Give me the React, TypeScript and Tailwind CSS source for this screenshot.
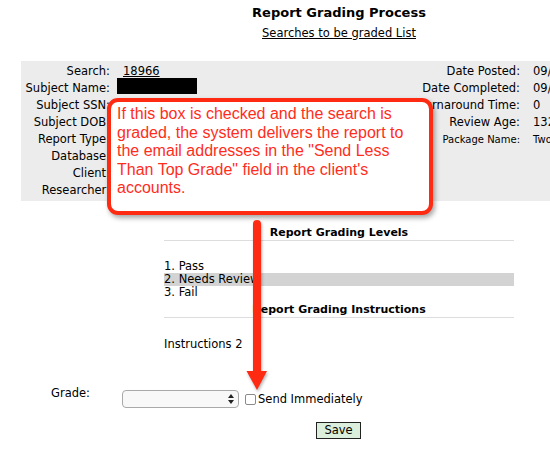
import React from "react";

const sans = { fontFamily: '"DejaVu Sans", Verdana, sans-serif' };

const leftRows: { label: string; value?: React.ReactNode }[] = [
  { label: "Search:", value: <a className="underline cursor-pointer">18966</a> },
  {
    label: "Subject Name:",
    value: <div className="h-[17px]"><span className="block w-[80px] h-[16px] bg-black -ml-[6px] -mt-[1.5px]" /></div>,
  },
  { label: "Subject SSN:", value: "XXX-XX-1234" },
  { label: "Subject DOB:", value: "01/01/1980" },
  { label: "Report Type:", value: "County Criminal" },
  { label: "Database:", value: "Statewide" },
  { label: "Client:", value: "Demo Client" },
  { label: "Researcher:", value: "Staff" },
];

const rightRows: { label: string; value: string; small?: boolean }[] = [
  { label: "Date Posted:", value: "09/14/2016" },
  { label: "Date Completed:", value: "09/14/2016" },
  { label: "Turnaround Time:", value: "0" },
  { label: "Review Age:", value: "132" },
  { label: "Package Name:", value: "Two County", small: true },
];

function Arrow() {
  return (
    <svg
      className="absolute left-[240px] top-[212px]"
      width="40"
      height="190"
      viewBox="0 0 40 190"
      style={{ filter: "drop-shadow(1px 2px 1.5px rgba(0,0,0,0.3))" }}
    >
      <line x1="17" y1="12" x2="17" y2="166" stroke="#ff2a12" strokeWidth="8" strokeLinecap="round" />
      <polygon points="6.5,159 27,159 17,178" fill="#ff2a12" />
    </svg>
  );
}

export default function App() {
  return (
    <div className="relative w-[550px] h-[457px] overflow-hidden bg-white text-black" style={sans}>
      <div className="w-[678px]">
        <div className="pt-[5px] text-center">
          <h1 className="text-[13px] leading-[16px] font-bold">Report Grading Process</h1>
          <a className="block mt-[4.5px] text-[11.5px] leading-[14px] underline cursor-pointer">
            Searches to be graded List
          </a>
        </div>

        <div className="mt-[21.5px] ml-[21px] w-[636px] bg-[#ececec] pt-[1.5px] pb-[2px] flex text-[11.5px] leading-[17px]">
          <div className="w-[330px] grid grid-cols-[89px_1fr] content-start">
            {leftRows.map((r) => (
              <React.Fragment key={r.label}>
                <div className="text-right whitespace-nowrap">{r.label}</div>
                <div className="pl-[13px] whitespace-nowrap">{r.value}</div>
              </React.Fragment>
            ))}
          </div>
          <div className="grid grid-cols-[169px_1fr] content-start">
            {rightRows.map((r) => (
              <React.Fragment key={r.label}>
                <div className={`text-right whitespace-nowrap ${r.small ? "text-[10px]" : ""}`}>{r.label}</div>
                <div className={`pl-[13px] whitespace-nowrap ${r.small ? "text-[10px]" : ""}`}>{r.value}</div>
              </React.Fragment>
            ))}
          </div>
        </div>

        <div className="ml-[164px] w-[350px] mt-[25px] text-[11.5px]">
          <div className="text-center font-bold text-[11px] leading-[14px] border-b border-[#dddddd]">
            Report Grading Levels
          </div>
          <div className="mt-[19.5px] leading-[13px]">
            <div>1. Pass</div>
            <div className="bg-[#d3d3d3]">2. Needs Review</div>
            <div>3. Fail</div>
          </div>
          <div className="mt-[3.5px] text-center font-bold text-[11px] leading-[14px] border-b border-[#dddddd]">
            Report Grading Instructions
          </div>
          <div className="mt-[20.5px] leading-[13px]">Instructions 2</div>
        </div>

        <div className="mt-[35px] flex items-start text-[11.5px]">
          <div className="ml-[51px] w-[71px] leading-[14px]">Grade:</div>
          <div className="mt-[4px] flex items-center">
            <div className="relative h-[18px]">
              <select className="block appearance-none w-[117px] h-[18px] rounded-[4px] border border-[#a9a9a9] bg-[#f8f8f8] outline-none" />
              <svg className="absolute right-[5px] top-[4px]" width="6" height="10" viewBox="0 0 6 10">
                <polygon points="3,0 6,4 0,4" fill="#222" />
                <polygon points="0,6 6,6 3,10" fill="#222" />
              </svg>
            </div>
            <input
              type="checkbox"
              className="appearance-none ml-[6px] w-[11px] h-[11px] border border-[#8a8a8a] rounded-[2px] bg-white"
            />
            <span className="ml-[2px] leading-[14px]">Send Immediately</span>
          </div>
        </div>

        <div className="mt-[14px] ml-[316px] flex">
          <button className="block w-[45px] h-[17px] bg-[#dcefdc] border border-[#222] text-[11.5px] leading-[15px]">
            Save
          </button>
        </div>
      </div>

      <div
        className="absolute left-[107px] top-[98px] w-[326px] h-[117px] border-[4px] border-[#ff2a12] rounded-[11px] bg-white pl-[6px] pt-[3px] shadow-[2px_3px_5px_rgba(0,0,0,0.35)] text-[16px] leading-[18.5px] text-[#ff2d1c]"
        style={{ fontFamily: '"Liberation Sans", Arial, sans-serif' }}
      >
        If this box is checked and the search is
        <br />
        graded, the system delivers the report to
        <br />
        the email addresses in the "Send Less
        <br />
        Than Top Grade" field in the client's
        <br />
        accounts.
      </div>

      <Arrow />
    </div>
  );
}
